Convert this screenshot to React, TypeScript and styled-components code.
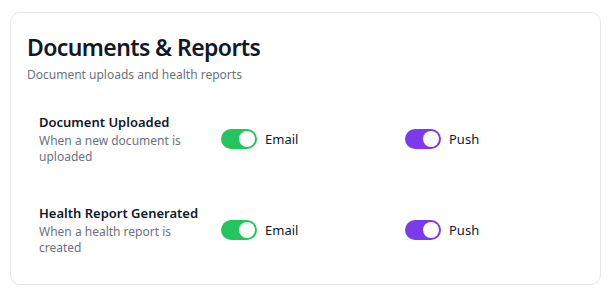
import React from "react";
import styled, { createGlobalStyle } from "styled-components";

const Global = createGlobalStyle`
  html, body { margin: 0; padding: 0; background: #ffffff; }
  body { font-family: "Noto Sans", "Open Sans", sans-serif; -webkit-font-smoothing: antialiased; }
  * { box-sizing: border-box; }
`;

const Page = styled.div`
  padding: 12px 15px 10px 10px;
`;

const Card = styled.section`
  border: 1px solid #e5e7eb;
  border-radius: 10px;
  background: #ffffff;
  padding: 18px 16px 16px 16px;
`;

const Header = styled.header`
  margin-bottom: 18px;
`;

const Title = styled.h2`
  margin: 0;
  font-size: 23px;
  line-height: 32px;
  font-weight: 600;
  color: #111827;
  letter-spacing: -0.6px;
`;

const Subtitle = styled.p`
  margin: 4px 0 0;
  font-size: 12px;
  line-height: 16px;
  color: #6b7280;
`;

const List = styled.div`
  display: flex;
  flex-direction: column;
  gap: 15px;
`;

const Row = styled.div`
  display: grid;
  grid-template-columns: 170px 172px 1fr;
  column-gap: 12px;
  align-items: center;
  padding: 12px;
`;

const Label = styled.div`
  display: flex;
  flex-direction: column;
`;

const RowTitle = styled.div`
  font-size: 13px;
  line-height: 18px;
  font-weight: 600;
  color: #111827;
`;

const RowDesc = styled.div`
  margin-top: 2px;
  max-width: 160px;
  font-size: 12px;
  line-height: 16px;
  color: #6b7280;
`;

const Channel = styled.label`
  display: flex;
  align-items: center;
  gap: 8px;
  font-size: 13px;
  color: #111827;
`;

const Track = styled.span<{ $color: string; $on: boolean }>`
  position: relative;
  display: inline-block;
  width: 36px;
  height: 20px;
  border-radius: 10px;
  background: ${(p) => (p.$on ? p.$color : "#d1d5db")};
  flex-shrink: 0;
`;

const Knob = styled.span<{ $on: boolean }>`
  position: absolute;
  top: 2px;
  left: ${(p) => (p.$on ? "18px" : "2px")};
  width: 16px;
  height: 16px;
  border-radius: 50%;
  background: #ffffff;
`;

type Item = { title: string; desc: string };

const items: Item[] = [
  { title: "Document Uploaded", desc: "When a new document is uploaded" },
  { title: "Health Report Generated", desc: "When a health report is created" },
];

const Toggle = ({ color, label }: { color: string; label: string }) => (
  <Channel>
    <Track $color={color} $on>
      <Knob $on />
    </Track>
    {label}
  </Channel>
);

export default function App() {
  return (
    <>
      <Global />
      <Page>
        <Card>
          <Header>
            <Title>Documents &amp; Reports</Title>
            <Subtitle>Document uploads and health reports</Subtitle>
          </Header>
          <List>
            {items.map((it) => (
              <Row key={it.title}>
                <Label>
                  <RowTitle>{it.title}</RowTitle>
                  <RowDesc>{it.desc}</RowDesc>
                </Label>
                <Toggle color="#22c55e" label="Email" />
                <Toggle color="#7c3aed" label="Push" />
              </Row>
            ))}
          </List>
        </Card>
      </Page>
    </>
  );
}
